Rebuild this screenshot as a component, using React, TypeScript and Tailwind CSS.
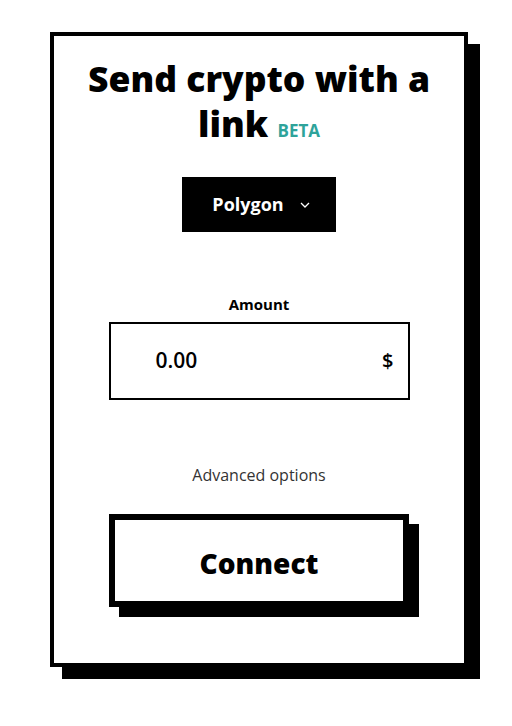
export default function App() {
  return (
    <div className="min-h-[726px] bg-white pt-[32px] pl-[50px]" style={{ fontFamily: '"Open Sans", "Noto Sans", sans-serif' }}>
      <div className="flex h-[635px] w-[418px] flex-col items-center border-4 border-black bg-white shadow-[12px_12px_0_0_#000]">
        <h1 className="mt-[20px] text-center text-[35.5px] font-extrabold leading-[45px] text-black">
          Send crypto with a
          <br />
          link <span className="text-[17px] font-bold text-[#2ea39a]">BETA</span>
        </h1>
        <button className="mt-[24px] flex h-[55px] w-[154px] items-center justify-center gap-[16px] bg-black pl-[4px] text-[18px] font-bold text-white">
          <span>Polygon</span>
          <svg width="10" height="6" viewBox="0 0 10 6" fill="none" stroke="white" strokeWidth="1.3">
            <polyline points="1,1 5,5 9,1" />
          </svg>
        </button>
        <div className="mt-[62px] text-[15px] font-bold leading-[20px] text-black">Amount</div>
        <div className="mt-[8px] flex h-[78px] w-[301px] items-center justify-between border-2 border-black pl-[45px] pr-[14px]">
          <span className="text-[21px] font-semibold text-black">0.00</span>
          <span className="text-[20px] font-semibold text-black">$</span>
        </div>
        <div className="mt-[65px] text-[16px] leading-[20px] text-[#333]">Advanced options</div>
        <button className="mt-[29px] flex h-[93px] w-[300px] items-center justify-center border-[6px] border-black bg-white pt-[5px] text-[28px] font-extrabold text-black shadow-[10px_10px_0_0_#000]">
          Connect
        </button>
      </div>
    </div>
  );
}
